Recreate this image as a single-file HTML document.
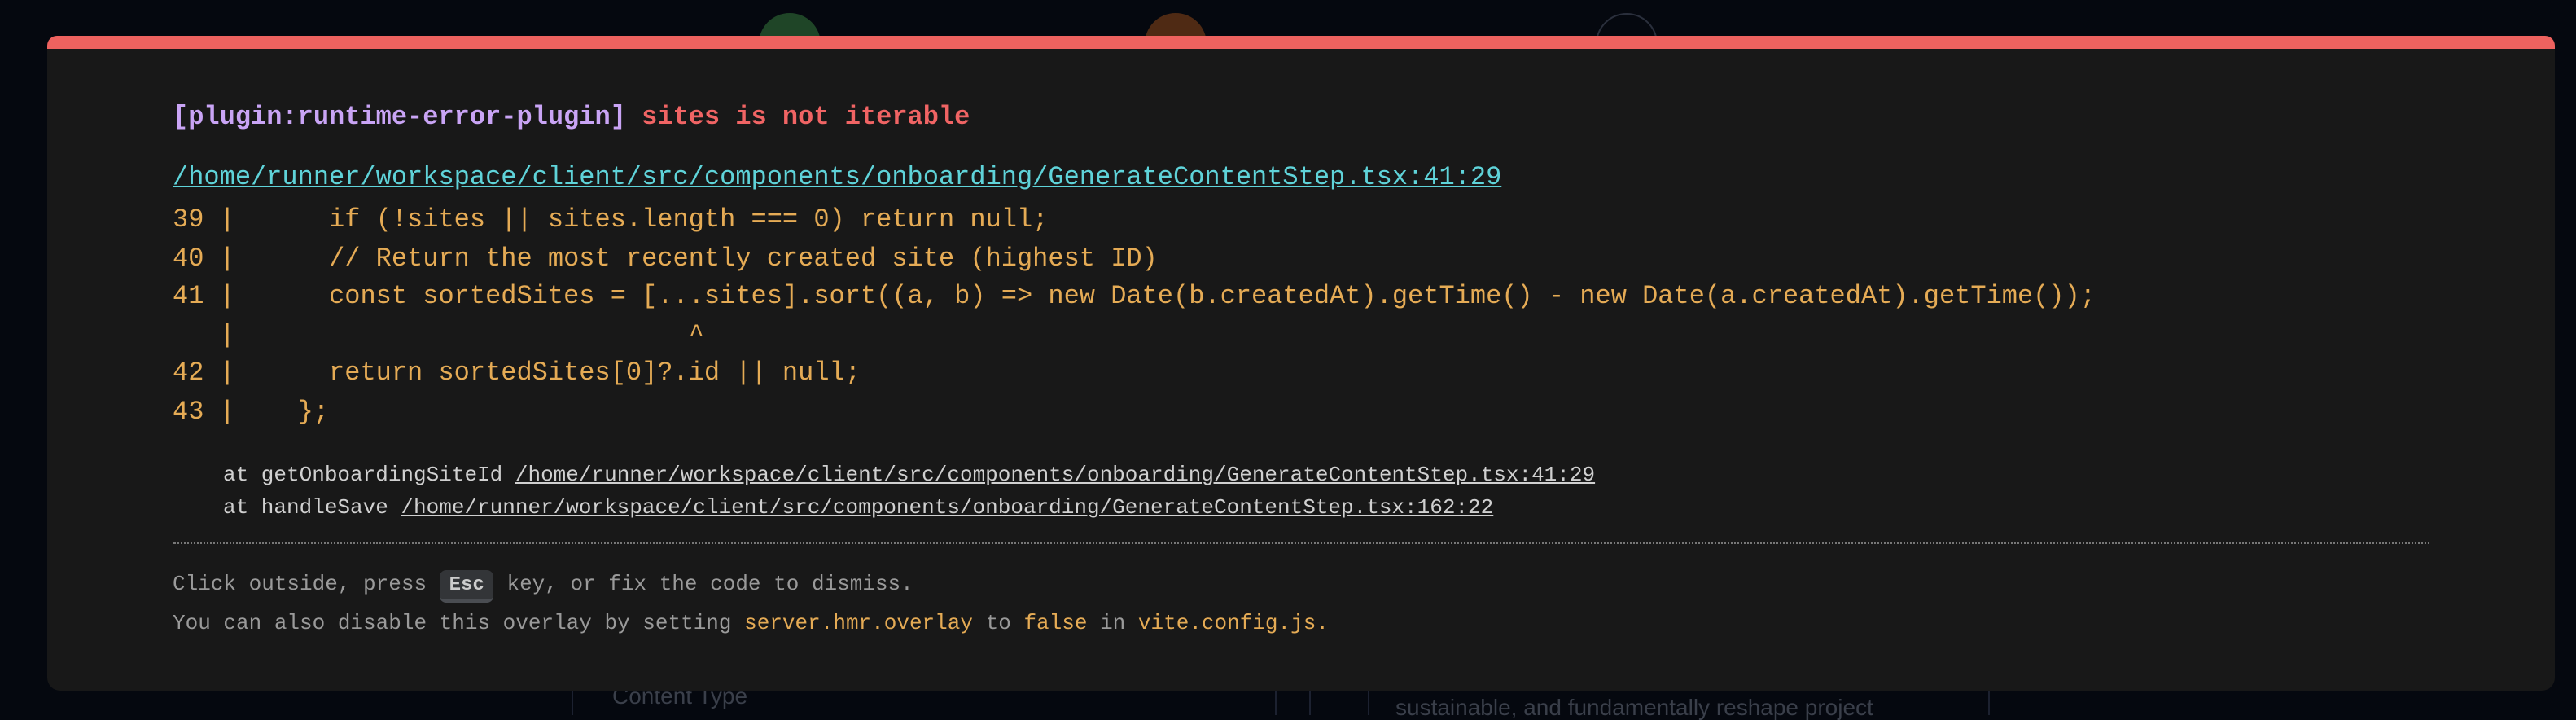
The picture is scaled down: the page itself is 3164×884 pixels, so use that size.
<!DOCTYPE html>
<html><head><meta charset="utf-8"><style>
html,body{margin:0;padding:0;background:#05080f;width:3164px;height:878px;overflow:hidden}
#s{position:absolute;left:0;top:0;width:1582px;height:439px;transform:scale(2);transform-origin:0 0;font-family:"Liberation Mono",monospace}
.c{position:absolute;border-radius:50%;width:38px;height:38px;top:8px}
.win{position:absolute;left:29px;top:22px;width:1540px;height:402px;background:#181818;border-top:8px solid #ee625f;border-radius:6px 6px 8px 8px;box-sizing:border-box;color:#d8d8d8}
.t{position:absolute;left:77px;white-space:pre;font-size:16px;line-height:23px}
.ttl{top:31px;font-weight:bold;color:#c9a4f5}
.ttl span{color:#f06464}
.file{top:68px;color:#5fd3d9;text-decoration:underline}
.code{top:94px;color:#e5ab55;line-height:23.6px}
.st{position:absolute;left:108px;top:252px;font-size:13px;line-height:20px;white-space:pre;color:#d0d0d0}
.st u{text-decoration:underline}
.hr{position:absolute;left:77px;width:1386px;top:303px;border-top:1px dotted #777}
.ft{position:absolute;left:77px;top:317px;font-size:13px;line-height:24px;color:#9a9a9a;white-space:pre}
.ft b{color:#e5ab55;font-weight:normal}
kbd{font-family:"Liberation Mono",monospace;font-weight:bold;background:#333538;color:#ccc;border-radius:4px;border-bottom:2px solid #4a4d52;padding:2px 6px;font-size:12px}
.bg{position:absolute;color:#3a3f4a;font-family:"Liberation Sans",sans-serif;font-size:14px}
.vl{position:absolute;top:420px;height:19px;width:1px;background:#1c2130}
</style></head><body><div id="s">
<div class="c" style="left:466px;background:#1f4527"></div>
<div class="c" style="left:703px;background:#4f2a14"></div>
<div class="c" style="left:980px;border:1.5px solid #2a2f3c;box-sizing:border-box"></div>
<div class="vl" style="left:351px"></div><div class="vl" style="left:783px"></div><div class="vl" style="left:804px"></div><div class="vl" style="left:840px"></div><div class="vl" style="left:1221px"></div>
<div class="bg" style="left:376px;top:419px">Content Type</div>
<div class="bg" style="left:857px;top:426px">sustainable, and fundamentally reshape project</div>
<div class="win">
<div class="t ttl">[plugin:runtime-error-plugin] <span>sites is not iterable</span></div>
<div class="t file">/home/runner/workspace/client/src/components/onboarding/GenerateContentStep.tsx:41:29</div>
<div class="t code">39 |      if (!sites || sites.length === 0) return null;
40 |      // Return the most recently created site (highest ID)
41 |      const sortedSites = [...sites].sort((a, b) => new Date(b.createdAt).getTime() - new Date(a.createdAt).getTime());
   |                             ^
42 |      return sortedSites[0]?.id || null;
43 |    };</div>
<div class="st">at getOnboardingSiteId <u>/home/runner/workspace/client/src/components/onboarding/GenerateContentStep.tsx:41:29</u>
at handleSave <u>/home/runner/workspace/client/src/components/onboarding/GenerateContentStep.tsx:162:22</u></div>
<div class="hr"></div>
<div class="ft">Click outside, press <kbd>Esc</kbd> key, or fix the code to dismiss.
You can also disable this overlay by setting <b>server.hmr.overlay</b> to <b>false</b> in <b>vite.config.js.</b></div>
</div>
</div></body></html>
